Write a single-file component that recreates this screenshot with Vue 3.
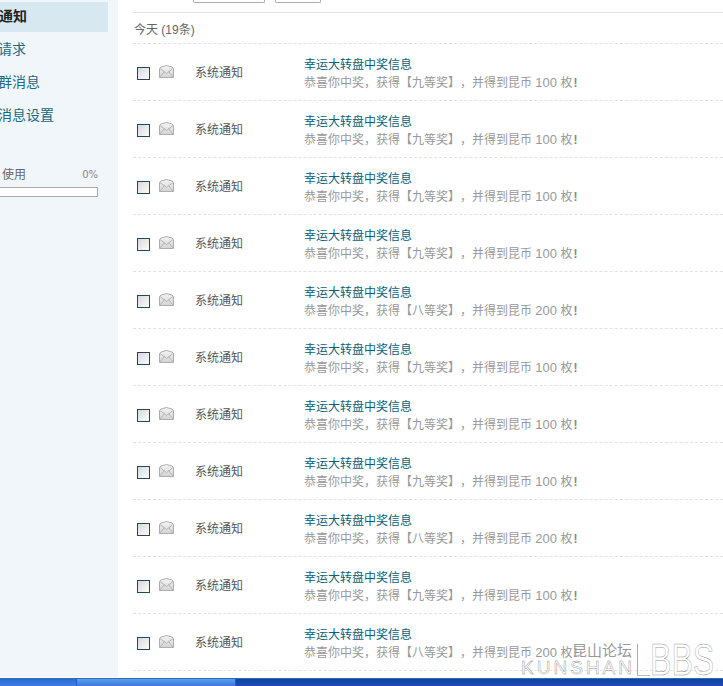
<script setup>
const prizes = ['九','九','九','九','八','九','九','九','八','九','八']
const rows = prizes.map((p, i) => ({ id: i, prize: p, coins: p === '八' ? 200 : 100 }))
</script>

<template>
  <div class="page">
    <div class="body">
      <aside class="side">
        <div class="nav active">通知</div>
        <div class="nav">请求</div>
        <div class="nav">群消息</div>
        <div class="nav">消息设置</div>
        <div class="usage">
          <div class="usage-top"><span>使用</span><span class="pct">0%</span></div>
          <div class="bar"></div>
        </div>
      </aside>
      <main class="main">
        <div class="tools">
          <span class="btn b1"></span>
          <span class="btn b2"></span>
        </div>
        <div class="day">今天 (19条)</div>
        <div v-for="r in rows" :key="r.id" class="row">
          <span class="check"></span>
          <svg class="mail" width="15" height="13" viewBox="0 0 15 13">
            <defs>
              <linearGradient id="mailfill" x1="0" y1="0" x2="0" y2="1">
                <stop offset="0" stop-color="#f4f4f4"/>
                <stop offset="1" stop-color="#d4d4d4"/>
              </linearGradient>
            </defs>
            <path d="M0.5 3.5 L2 2 L7.5 0.5 L13 2 L14.5 3.5 V12.5 H0.5 Z" fill="url(#mailfill)" stroke="#adadad"/>
            <path d="M1 3.5 L7.5 8.5 L14 3.5 M1 12 L5.5 6.5 M14 12 L9.5 6.5" fill="none" stroke="#b4b4b4"/>
          </svg>
          <span class="from">系统通知</span>
          <div class="text">
            <div class="title">幸运大转盘中奖信息</div>
            <div class="desc">恭喜你中奖，获得【{{ r.prize }}等奖】，并得到昆币 <span class="num">{{ r.coins }}</span> 枚<b class="bang">!</b></div>
          </div>
        </div>
      </main>
    </div>
    <div class="taskbar">
      <span class="start"></span>
      <span class="task"></span>
      <span class="rest"></span>
    </div>
    <div class="mark">
      <div class="mark-left">
        <div class="mark-cn">昆山论坛</div>
        <div class="mark-en">KUNSHAN</div>
      </div>
      <span class="mark-l"></span>
      <div class="mark-big">BBS</div>
    </div>
  </div>
</template>

<style>
html, body { margin: 0; overflow: hidden; background: #fff; }
</style>

<style scoped>
.page {
  position: relative;
  width: 723px;
  height: 686px;
  display: flex;
  flex-direction: column;
  overflow: hidden;
  background: #fff;
  font-family: "Liberation Sans", "Noto Sans CJK SC", sans-serif;
  font-size: 12px;
  text-spacing-trim: space-all;
}
.body { flex: 1; display: flex; min-height: 0; }
.side {
  width: 118px;
  height: 677px;
  flex: none;
  background: #f0f6fa;
  padding-top: 2px;
  box-sizing: border-box;
  overflow: hidden;
}
.nav {
  width: 108px;
  height: 33px;
  line-height: 30px;
  font-size: 14px;
  color: #1a6a82;
  text-indent: -2px;
}
.nav.active {
  height: 30px;
  line-height: 29px;
  margin-bottom: 2px;
  background: #d8e8f1;
  color: #222;
  font-weight: 700;
  text-indent: -1px;
}
.usage { width: 98px; margin-top: 33px; }
.usage-top {
  display: flex;
  justify-content: space-between;
  padding-left: 2px;
  height: 18px;
  line-height: 18px;
  color: #666;
}
.pct { color: #888; font-family: "DejaVu Sans", sans-serif; font-size: 10px; }
.bar { height: 8px; border: 1px solid #a9a9a9; border-left: 0; background: #fff; margin-top: 3px; }
.main { flex: 1; padding-left: 15px; min-width: 0; overflow: hidden; }
.tools {
  height: 12px;
  border-bottom: 1px solid #e0e0e0;
  display: flex;
  align-items: flex-start;
  padding-left: 60px;
  gap: 10px;
}
.btn {
  display: block;
  height: 2px;
  border: 1px solid #aaa;
  border-top: 0;
  border-radius: 0 0 2px 2px;
}
.b1 { width: 70px; }
.b2 { width: 44px; }
.day {
  height: 30px;
  line-height: 34px;
  color: #666;
  padding-left: 1px;
  border-bottom: 1px dashed #e2e2e2;
}
.row {
  height: 56px;
  border-bottom: 1px dashed #e2e2e2;
  display: flex;
  align-items: flex-start;
  color: #555;
}
.check {
  width: 11px;
  height: 11px;
  margin: 23px 0 0 4px;
  border: 1px solid #1f4a5e;
  background: linear-gradient(135deg, #d8d8d8, #fdfdfd);
  flex: none;
}
.mail { margin: 21px 0 0 9px; flex: none; }
.from { margin: 21px 0 0 21px; width: 110px; line-height: 17px; flex: none; }
.text { margin-top: 12px; margin-left: -1px; white-space: nowrap; }
.title { color: #0c5f78; line-height: 18px; }
.desc { color: #999; line-height: 18px; }
.num { font-size: 13px; }
.bang { color: #888; margin-left: 1px; }
.taskbar { height: 8px; flex: none; display: flex; background: #1f5fd0; border-top: 1px solid #2a6fb0; box-sizing: border-box; }
.start { width: 76px; background: linear-gradient(#2a6ad8, #3f7fe0); }
.task { width: 158px; margin-left: 1px; background: linear-gradient(#5f9cec, #3a78e0); }
.rest { flex: 1; margin-left: 1px; background: linear-gradient(#16409f, #1a4cb8); }
.mark {
  position: absolute;
  left: 522px;
  top: 643px;
  display: flex;
  align-items: flex-end;
}
.mark-left { display: flex; flex-direction: column; align-items: flex-end; width: 110px; margin-right: 5px; }
.mark-cn { font-size: 15px; line-height: 16px; color: #999; text-shadow: 0 0 1px #fff; }
.mark-en {
  font-size: 19px;
  line-height: 18px;
  letter-spacing: 3px;
  margin-right: -3px;
  color: #fff;
  -webkit-text-stroke: 0.4px #888;
}
.mark-l {
  width: 13px;
  height: 32px;
  box-sizing: border-box;
  border-left: 1px solid #aaa;
  border-bottom: 1px solid #bbb;
  margin-bottom: 1px;
}
.mark-big {
  font-size: 44px;
  line-height: 34px;
  width: 65px;
  color: #fff;
  -webkit-text-stroke: 0.5px #999;
  transform: scaleX(0.73);
  transform-origin: left;
}
</style>
